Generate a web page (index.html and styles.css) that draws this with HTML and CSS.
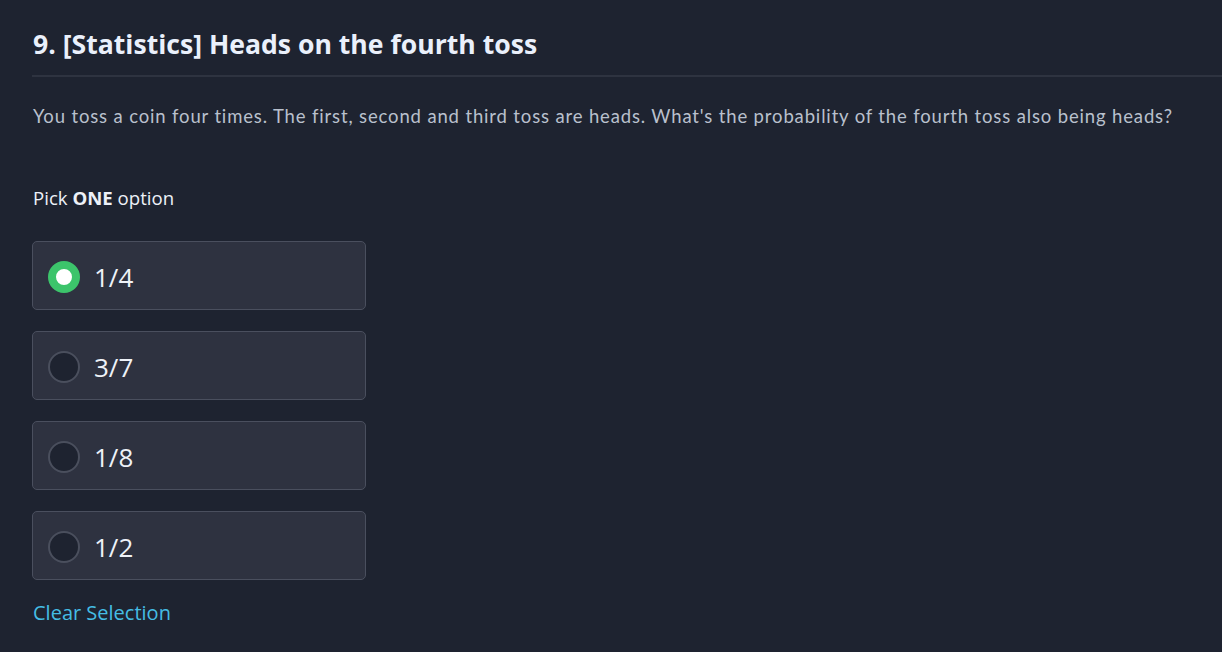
FILE: index.html
```html
<!DOCTYPE html>
<html>
<head>
<meta charset="utf-8">
<link rel="stylesheet" href="styles.css">
</head>
<body>
<div class="page">
  <h1 class="title">9. [Statistics] Heads on the fourth toss</h1>
  <div class="divider"></div>
  <p class="desc">You toss a coin four times. The first, second and third toss are heads. What's the probability of the fourth toss also being heads?</p>
  <p class="pick">Pick <b>ONE</b> option</p>
  <div class="options">
    <div class="option"><span class="radio checked"></span><span class="label">1/4</span></div>
    <div class="option"><span class="radio"></span><span class="label">3/7</span></div>
    <div class="option"><span class="radio"></span><span class="label">1/8</span></div>
    <div class="option"><span class="radio"></span><span class="label">1/2</span></div>
  </div>
  <a class="clear">Clear Selection</a>
</div>
</body>
</html>
```
FILE: styles.css
```css
html, body {
  margin: 0;
  padding: 0;
  background: #1e2330;
  height: 100%;
}
.page {
  padding: 26px 0 0 33px;
  font-family: "Open Sans", sans-serif;
}
.title {
  margin: 0;
  font-size: 26.6px;
  font-weight: 700;
  color: #eaf0fb;
  line-height: 36px;
}
.divider {
  margin: 13px 0 0 -1px;
  height: 2px;
  background: #2e3340;
}
.desc {
  margin: 27px 0 0;
  font-family: Lato, sans-serif;
  font-size: 18.5px;
  letter-spacing: 0.85px;
  color: #b9c0cd;
  line-height: 24px;
}
.pick {
  margin: 58px 0 0;
  font-size: 18.6px;
  color: #edf1f8;
  line-height: 24px;
}
.pick b { font-weight: 700; }
.options {
  margin-top: 31px;
  margin-left: -1px;
  display: flex;
  flex-direction: column;
  gap: 21px;
  width: 334px;
}
.option {
  box-sizing: border-box;
  height: 69px;
  border: 1.5px solid #4a4f5e;
  border-radius: 5px;
  background: #2e3240;
  display: flex;
  align-items: center;
  padding-left: 15px;
}
.radio {
  box-sizing: border-box;
  width: 32px;
  height: 32px;
  border-radius: 50%;
  border: 2px solid #4a4f5d;
  background: #1e2330;
  margin-top: 2px;
}
.radio.checked {
  border: 8px solid #3cc46b;
  background: #ffffff;
}
.label {
  margin-left: 14px;
  font-size: 26px;
  color: #eef2f8;
  margin-top: 2px;
}
.clear {
  display: block;
  margin-top: 20px;
  font-size: 20px;
  color: #45bde4;
  line-height: 26px;
}
```
